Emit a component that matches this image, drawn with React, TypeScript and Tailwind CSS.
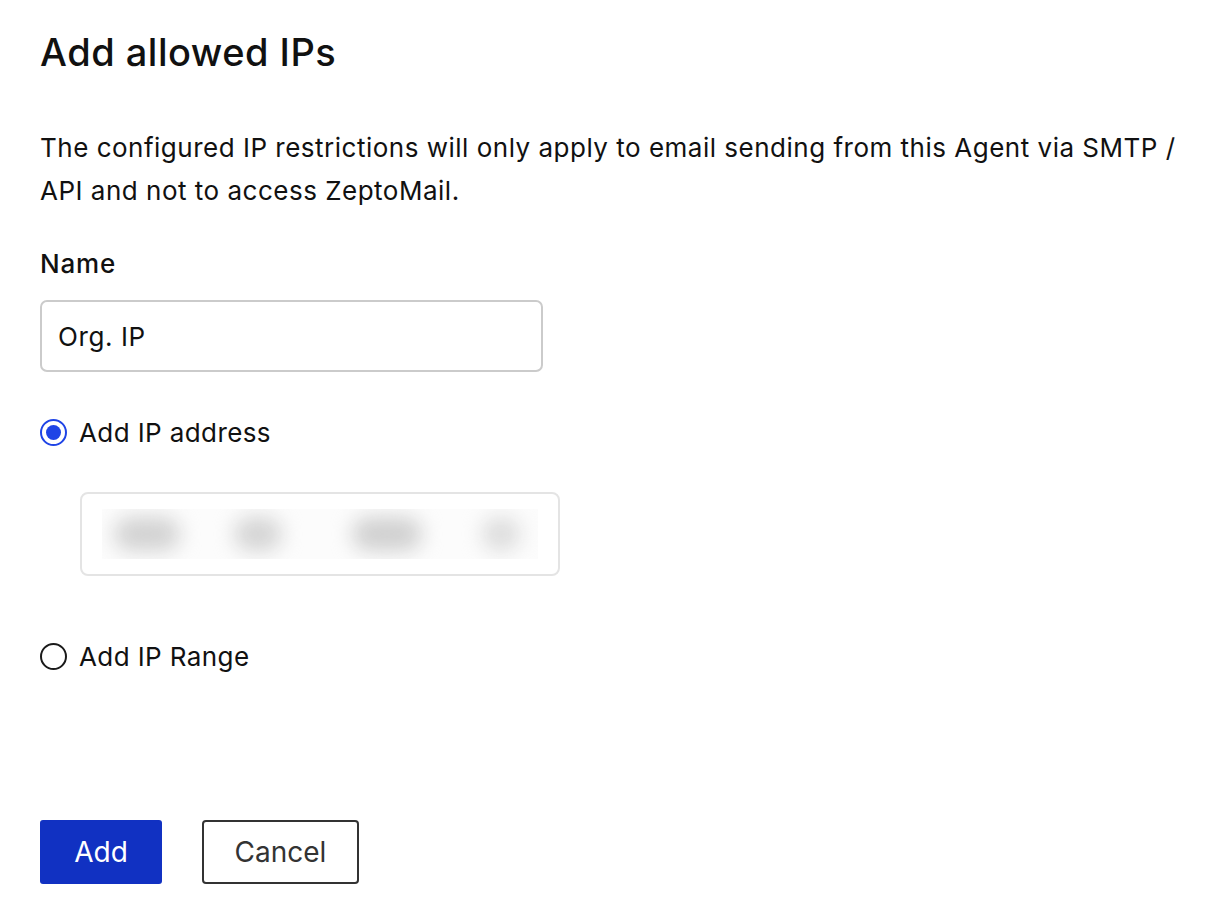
import { useState } from 'react'

const Radio = ({ checked, label, onClick }: { checked: boolean; label: string; onClick: () => void }) => (
  <button onClick={onClick} className="flex items-center h-9 gap-[12px] text-left">
    <span
      className={`w-[27px] h-[27px] rounded-full border-2 flex items-center justify-center ${checked ? 'border-[#1f44e6]' : 'border-[#1a1a1a]'}`}
    >
      {checked && <span className="w-[15px] h-[15px] rounded-full bg-[#1f44e6]" />}
    </span>
    <span className="text-[26px] tracking-[0.4px] text-[#111]">{label}</span>
  </button>
)

const App = () => {
  const [mode, setMode] = useState<'address' | 'range'>('address')

  return (
    <div className="min-h-screen bg-white pl-10 pt-[30px] font-['Inter','Noto_Sans',sans-serif] text-[#111]">
      <h1 className="text-[38px] leading-[44px] font-medium tracking-[0.5px]">Add allowed IPs</h1>

      <p className="mt-[52px] text-[26px] leading-[43px] tracking-[0.5px]">
        The configured IP restrictions will only apply to email sending from this Agent via SMTP /
        <br />
        API and not to access ZeptoMail.
      </p>

      <div className="mt-[34px] text-[26px] leading-9 font-medium tracking-[0.8px]">Name</div>

      <input
        defaultValue="Org. IP"
        className="mt-[18px] block w-[503px] h-[72px] rounded-[7px] border-2 border-[#cbcbcb] px-4 text-[26px] tracking-[0.6px] text-[#111] outline-none"
      />

      <div className="mt-[42px]">
        <Radio checked={mode === 'address'} label="Add IP address" onClick={() => setMode('address')} />
      </div>

      {/* IP address, blurred out */}
      <div className="mt-[42px] ml-10 w-[480px] h-[84px] rounded-[8px] border-2 border-[#e4e4e4] flex items-center px-5">
        <div className="w-full h-[50px] bg-[#fcfcfc] flex items-center overflow-hidden">
          <div className="ml-[12px] w-[66px] h-[34px] rounded-full bg-[#d2d2d2] blur-[10px]" />
          <div className="ml-[54px] w-[48px] h-[34px] rounded-full bg-[#d4d4d4] blur-[10px]" />
          <div className="ml-[70px] w-[70px] h-[34px] rounded-full bg-[#d0d0d0] blur-[10px]" />
          <div className="ml-[60px] w-[38px] h-[34px] rounded-full bg-[#dcdcdc] blur-[10px]" />
        </div>
      </div>

      <div className="mt-[62px]">
        <Radio checked={mode === 'range'} label="Add IP Range" onClick={() => setMode('range')} />
      </div>

      <div className="mt-[146px] flex gap-10">
        <button className="w-[122px] h-16 rounded-[3px] bg-[#1131c2] text-white text-[28px]">Add</button>
        <button className="w-[157px] h-16 rounded-[4px] border-2 border-[#333] bg-white text-[#333] text-[28px]">
          Cancel
        </button>
      </div>
    </div>
  )
}

export default App
